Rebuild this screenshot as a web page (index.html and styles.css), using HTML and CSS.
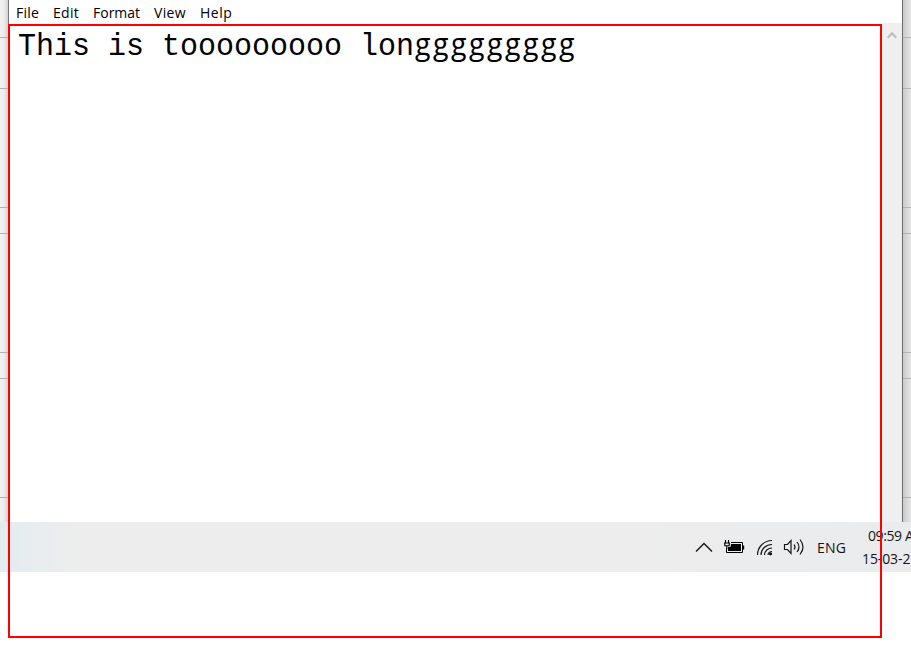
FILE: index.html
```html
<!DOCTYPE html>
<html lang="en">
<head>
<meta charset="utf-8">
<title>Notepad</title>
<link rel="stylesheet" href="styles.css">
</head>
<body>
<main class="desktop">
  <div class="workspace">
    <div class="backdrop left"><i></i><i></i><i></i><i></i><i></i><i></i><i></i></div>
    <section class="window">
      <nav class="menu"><span class="file">File</span><span class="edit">Edit</span><span class="format">Format</span><span class="view">View</span><span class="help">Help</span></nav>
      <div class="body">
        <div class="text">This is tooooooooo lon<span class="wide">ggggggggg</span></div>
        <div class="scrollbar"><svg width="10" height="8" viewBox="0 0 10 8"><path d="M.7 6.700 5 2.200l4.300 4.500" fill="none" stroke="#bdbdbd" stroke-width="2"/></svg></div>
      </div>
    </section>
    <div class="backdrop right"><i></i><i></i><i></i><i></i><i></i><i></i><i></i></div>
  </div>
  <footer class="taskbar">
    <svg class="tray" width="116" height="22" viewBox="0 0 116 22" fill="none" stroke="#151515">
      <path d="M1 15.500 9 7.500l8 8" stroke-width="1.400"/>
      <path d="M36 6.500h11.500v10h-16V12" stroke="#000"/>
      <path d="M36 8h10v7H33v-4h2.500z" fill="#000" stroke="none"/>
      <path d="M48 9.500h1.200v4H48z" fill="#000" stroke="none"/>
      <path d="M30.500 4v3M33.500 4v3M29 7h6M29.800 7.500v2.200h4.400V7.500M31.800 10v3" stroke="#000" stroke-width="1.100"/>
      <path d="M62.500 19C62.500 11 69 4.500 77 4.500M66 19C66 13 71 8.500 77 8.500M69.500 19C69.500 15 73 12 77 12M73 19C73 17 75 15.500 77 15.500" stroke-width="1.150"/>
      <circle cx="75.500" cy="17.800" r="1.600" fill="#111" stroke="none"/>
      <path d="M89.500 8.500h3l3.500-4v13l-3.500-4h-3z" stroke-width="1.200"/>
      <path d="M99 8.500q2 2.500 0 5M102 6q4 5 0 10M105 3.500q6 7.500 0 15" stroke-width="1.200"/>
    </svg>
    <span class="lang">ENG</span>
    <div class="clock"><span class="time">09:59 A</span><span class="date">15-03-2</span></div>
  </footer>
  <div class="highlight"></div>
</main>
</body>
</html>
```
FILE: styles.css
```css
* { box-sizing: border-box; }
body { margin: 0; background: #fff; overflow: hidden; font-family: "Open Sans", sans-serif; color: #000; }
.desktop { position: relative; width: 911px; height: 662px; overflow: hidden; }
.workspace { display: flex; height: 522px; }
.backdrop { display: grid; grid-template-rows: 38px 51px 119px 26px 119px 26px 119px 24px; }
.backdrop i { border-bottom: 1px solid #b3b3b3; }
.left { width: 8px; background: linear-gradient(90deg, #f2f2f2, #ececec 50%, #d2d2d2); }
.right { width: 8px; background: linear-gradient(90deg, #cacaca, #e6e6e6); }
.window { width: 895px; display: flex; flex-direction: column; border-left: 1px solid #777; border-right: 1px solid #6b6b6b; background: #fff; }
.menu { display: flex; height: 23px; padding-left: 7px; font-size: 14px; line-height: 25px; white-space: nowrap; }
.file { width: 37px; letter-spacing: .25px; }
.edit { width: 40px; letter-spacing: .3px; }
.format { width: 61px; letter-spacing: 0; }
.view { width: 46px; letter-spacing: .3px; }
.help { letter-spacing: .5px; }
.body { display: flex; flex: 1; }
.text { flex: 1; height: 39px; padding: 6px 0 0 9px; font: 30px/34px "Liberation Mono", monospace; white-space: pre; transform: scaleY(1.07); transform-origin: 0 31px; }
.wide { margin-left: 1px; font: 28.5px/30px "Open Sans", sans-serif; letter-spacing: 2.5px; }
.scrollbar { width: 20px; padding: 8px 0 0 4px; background: #efefef; }
.scrollbar svg { display: block; margin-left: 1px; }
.taskbar { display: flex; height: 50px; background: linear-gradient(90deg, #e3ecf0, #ededed 75px, #ededed 650px, #e9ebed); font-size: 14px; white-space: nowrap; color: #151515; }
.tray { flex: none; margin: 14px 0 0 695px; }
.lang { flex: none; width: 46px; padding-left: 6px; line-height: 52px; letter-spacing: .2px; }
.clock { flex: none; display: flex; flex-direction: column; width: 49px; margin-left: 5px; line-height: 23px; padding-top: 2px; overflow: hidden; }
.time { padding-left: 6px; letter-spacing: -.4px; }
.date { letter-spacing: -.1px; }
.highlight { position: absolute; left: 8px; top: 24px; width: 874px; height: 614px; border: 2px solid #f00; }
```
